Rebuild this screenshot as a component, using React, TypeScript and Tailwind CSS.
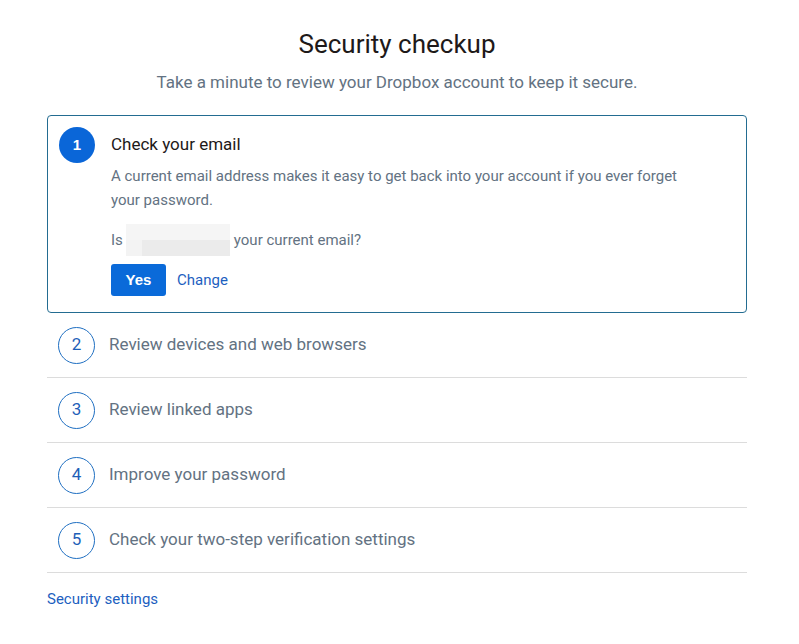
const steps = [
  "Review devices and web browsers",
  "Review linked apps",
  "Improve your password",
  "Check your two-step verification settings",
];

export default function App() {
  return (
    <div className="min-h-[644px] bg-white font-['Roboto',sans-serif]">
      <div className="ml-[47px] w-[700px] pt-[26px]">
        <h1 className="text-center text-[26px] leading-[36px] text-[#1e1919]">Security checkup</h1>
        <p className="mt-[8px] text-center text-[17px] leading-[24px] text-[#637282]">
          Take a minute to review your Dropbox account to keep it secure.
        </p>

        {/* Active step */}
        <div className="mt-[21px] flex rounded-[4px] border border-[#236c91] pl-[11px] pt-[11px] pb-[16px]">
          <div className="flex h-[36px] w-[36px] shrink-0 items-center justify-center rounded-full bg-[#0a66d8] font-['Liberation_Sans',sans-serif] text-[15px] font-bold text-white">
            1
          </div>
          <div className="ml-[16px] pt-[5px]">
            <h2 className="text-[17px] leading-[24px] text-[#1e1919]">Check your email</h2>
            <p className="mt-[8px] w-[590px] text-[15px] leading-[24px] text-[#637282]">
              A current email address makes it easy to get back into your account if you ever forget your password.
            </p>
            <div className="mt-[12px] flex items-center text-[15px] leading-[24px] text-[#637282]">
              <span>Is</span>
              <span className="ml-[3px] flex h-[32px] w-[104px] flex-col bg-[#f3f3f3]">
                <span className="h-[16px] bg-[#f5f5f5]" />
                <span className="ml-[16px] h-[16px] bg-[#ebebeb]" />
              </span>
              <span className="ml-[4px]">your current email?</span>
            </div>
            <div className="mt-[8px] flex items-center">
              <button className="h-[32px] w-[55px] rounded-[3px] bg-[#0a6ad9] font-['Liberation_Sans',sans-serif] text-[15px] font-bold text-white">
                Yes
              </button>
              <a className="ml-[11px] text-[15px] text-[#1d5fbf]">Change</a>
            </div>
          </div>
        </div>

        {/* Remaining steps */}
        <div>
          {steps.map((s, i) => (
            <div key={s} className="flex h-[65px] items-center border-b border-[#dcdcdc] pl-[11px]">
              <div className="flex h-[37px] w-[37px] shrink-0 items-center justify-center rounded-full border border-[#1f6fc2] text-[17px] text-[#1f5fb8]">
                {i + 2}
              </div>
              <span className="ml-[14px] text-[17px] text-[#637282]">{s}</span>
            </div>
          ))}
        </div>

        <a className="mt-[16px] block text-[15px] leading-[20px] text-[#1d5fbf]">Security settings</a>
      </div>
    </div>
  );
}
